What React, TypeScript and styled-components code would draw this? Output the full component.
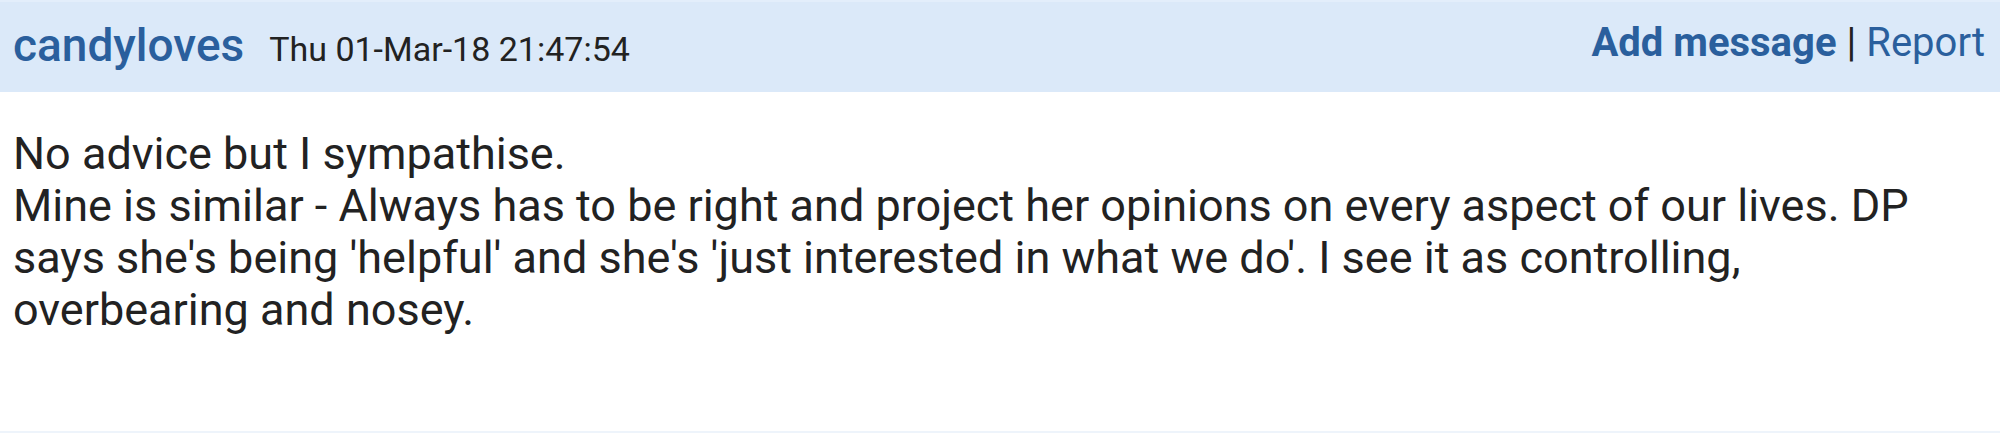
import React from "react";
import styled, { createGlobalStyle } from "styled-components";

const GlobalStyle = createGlobalStyle`
  html, body {
    margin: 0;
    padding: 0;
    background: #ffffff;
  }
  body {
    font-family: Roboto, "Liberation Sans", Arial, sans-serif;
    -webkit-font-smoothing: antialiased;
  }
`;

const POST = {
  author: "candyloves",
  date: "Thu 01-Mar-18 21:47:54",
  lines: [
    "No advice but I sympathise.",
    "Mine is similar - Always has to be right and project her opinions on every aspect of our lives. DP says she's being 'helpful' and she's 'just interested in what we do'. I see it as controlling, overbearing and nosey.",
  ],
};

const App = () => {
  return (
    <>
      <GlobalStyle />
      <Post>
        <PostHeader>
          <Meta>
            <Author href="#">{POST.author}</Author>
            <PostDate>{POST.date}</PostDate>
          </Meta>
          <Actions>
            <ActionLink href="#" $bold>
              Add message
            </ActionLink>
            <Divider>|</Divider>
            <ActionLink href="#">Report</ActionLink>
          </Actions>
        </PostHeader>
        <PostBody>
          {POST.lines.map((line, i) => (
            <Paragraph key={i}>{line}</Paragraph>
          ))}
        </PostBody>
      </Post>
    </>
  );
};

export default App;

const Post = styled.article`
  display: flex;
  flex-direction: column;
  width: 100%;
  height: 433px;
  border-bottom: 2px solid #eef4fb;
  box-sizing: border-box;
`;

const PostHeader = styled.header`
  display: flex;
  justify-content: space-between;
  align-items: flex-start;
  height: 92px;
  box-sizing: border-box;
  padding: 0 15px 0 13px;
  background-color: #dbe9f9;
  border-top: 2px solid #e3eefb;
`;

const Meta = styled.div`
  display: flex;
  align-items: baseline;
  gap: 25px;
  padding-top: 16px;
`;

const Author = styled.a`
  font-size: 46px;
  font-weight: 500;
  color: #2a5f9d;
  text-decoration: none;
`;

const PostDate = styled.span`
  font-size: 34px;
  color: #222222;
`;

const Actions = styled.div`
  display: flex;
  align-items: baseline;
  gap: 10px;
  padding-top: 17px;
  font-size: 40px;
`;

const ActionLink = styled.a<{ $bold?: boolean }>`
  color: #2a5f9d;
  font-weight: ${({ $bold }) => ($bold ? 700 : 400)};
  text-decoration: none;
`;

const Divider = styled.span`
  color: #222222;
  font-weight: 400;
`;

const PostBody = styled.div`
  padding: 36px 26px 0 13px;
  font-size: 45px;
  line-height: 52px;
  color: #222222;
`;

const Paragraph = styled.p`
  margin: 0;
`;
